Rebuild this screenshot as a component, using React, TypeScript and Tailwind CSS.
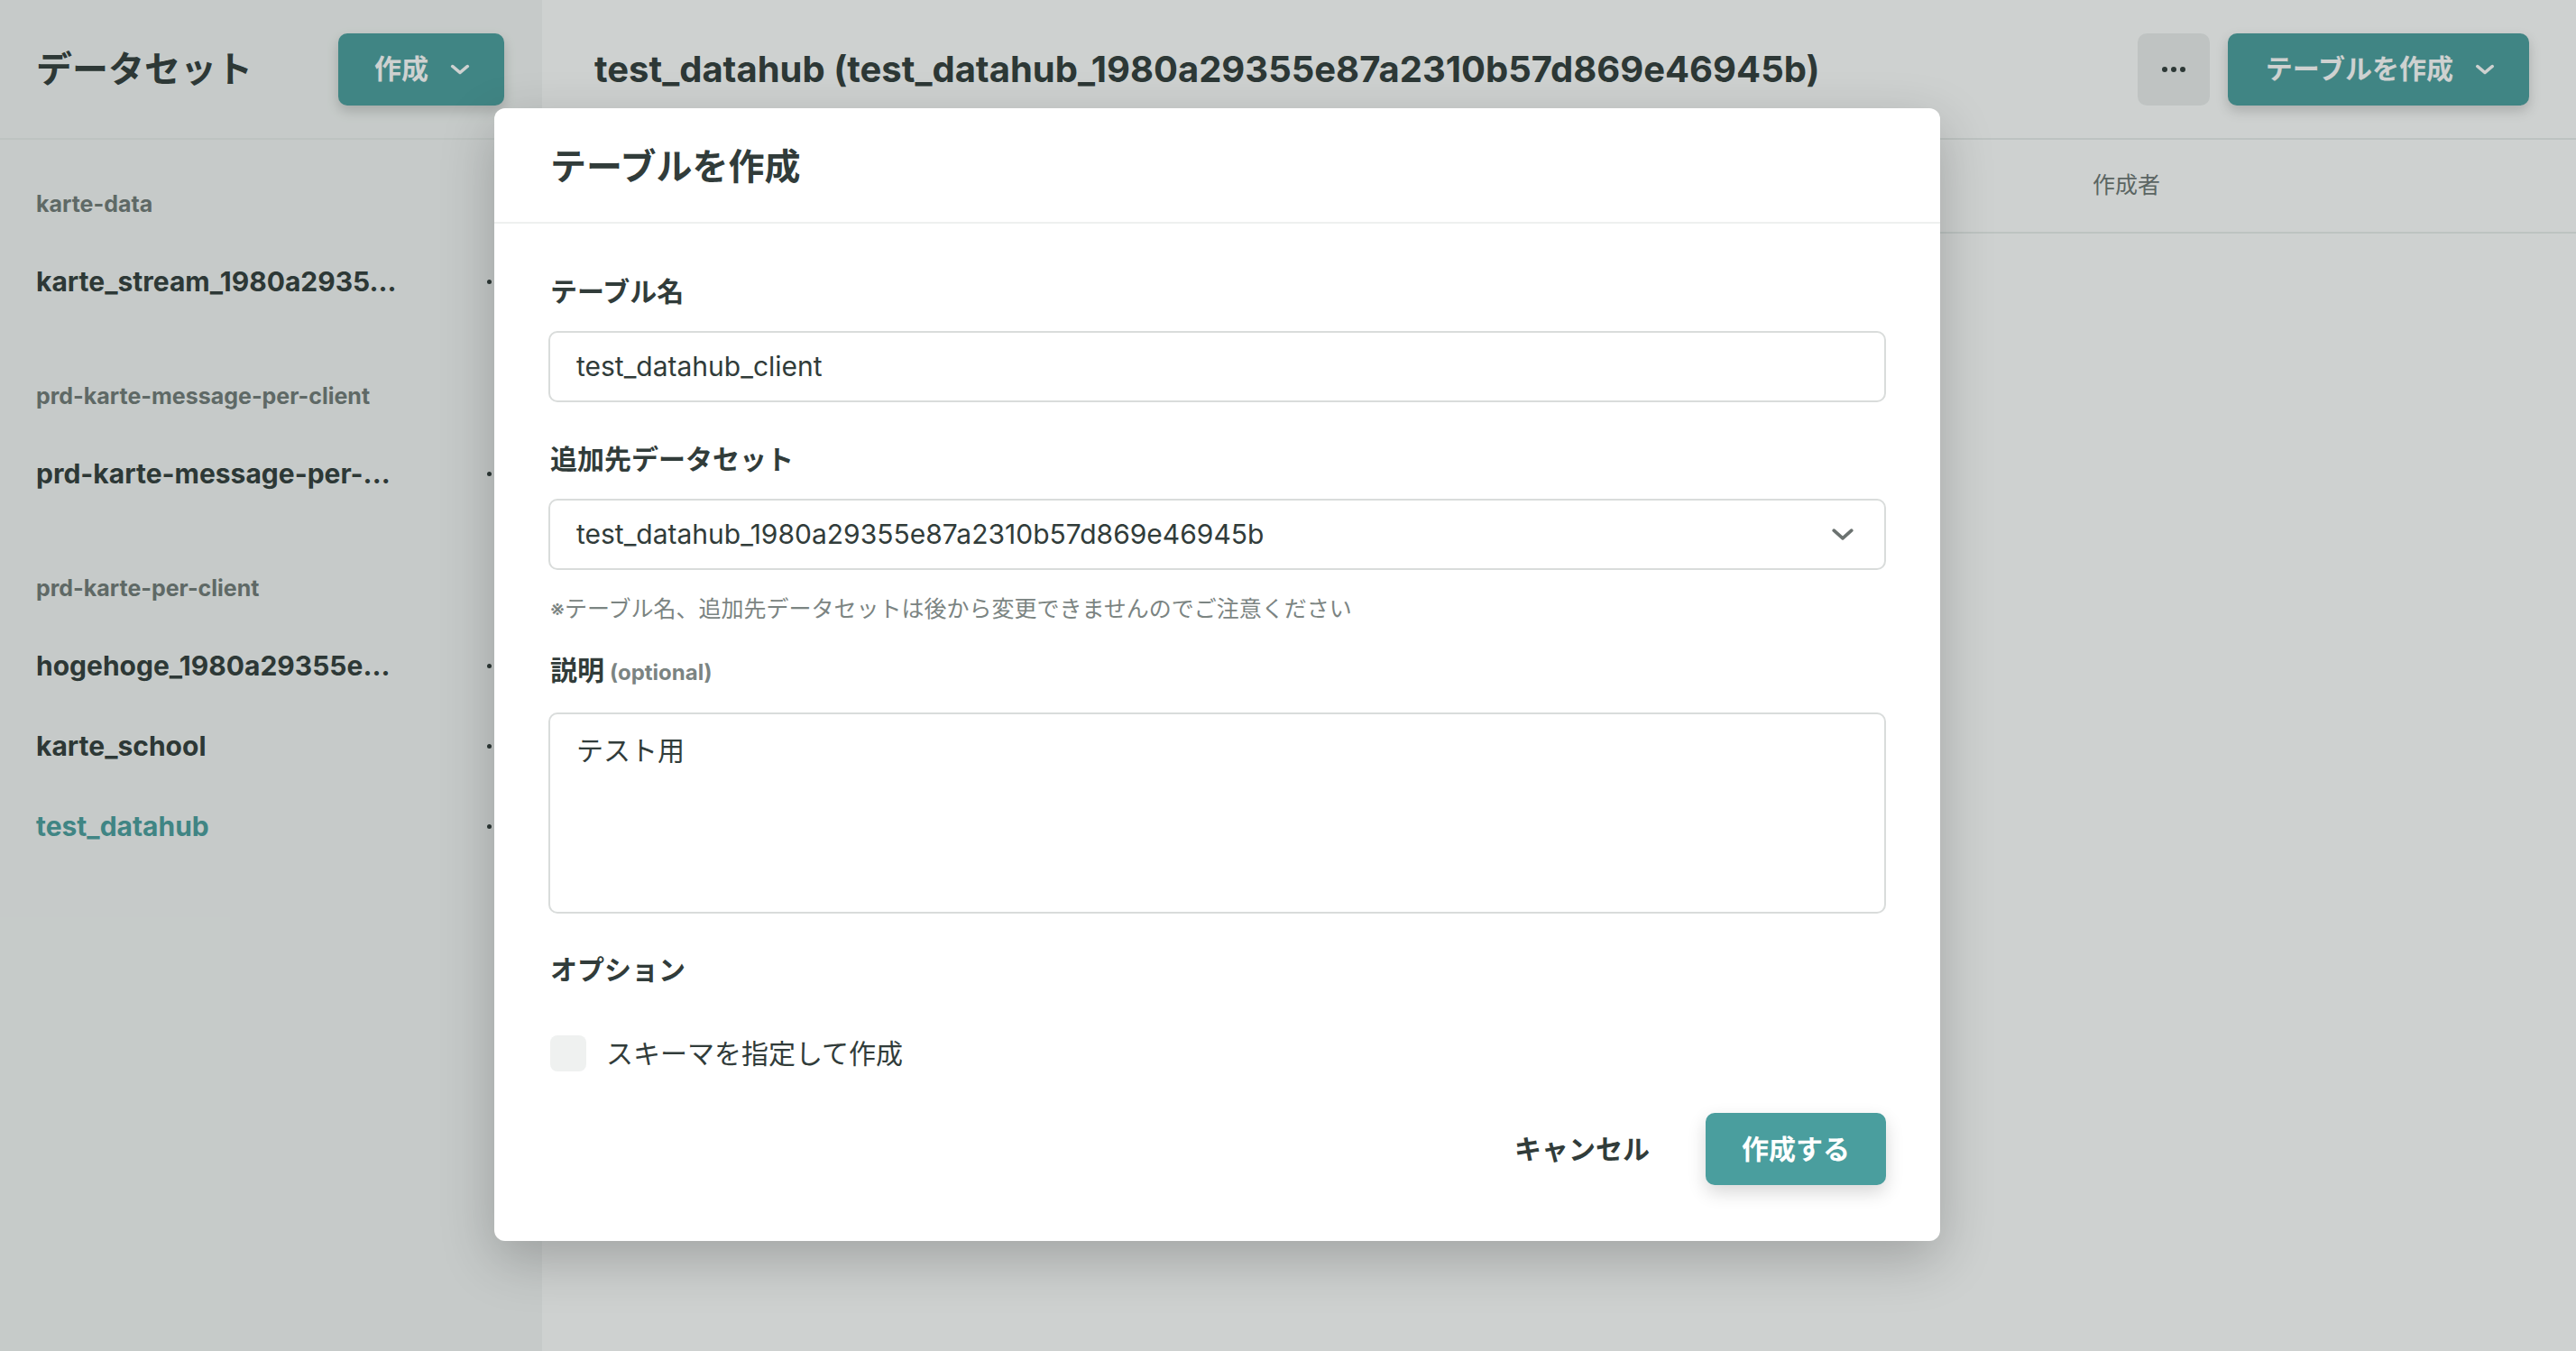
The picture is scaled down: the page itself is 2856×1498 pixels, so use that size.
import React from "react";

const Chevron = ({ w, h, sw, className }: { w: number; h: number; sw: number; className?: string }) => (
  <svg width={w} height={h} viewBox="0 0 24 14" fill="none" className={className} preserveAspectRatio="none">
    <path d="M3 3L12 11L21 3" stroke="currentColor" strokeWidth={sw} strokeLinecap="round" strokeLinejoin="round" />
  </svg>
);

const Dots = ({ className }: { className?: string }) => (
  <div className={"flex items-center gap-[5px] " + (className ?? "")}>
    <span className="block w-[5px] h-[5px] rounded-full bg-[#313c3a]" />
    <span className="block w-[5px] h-[5px] rounded-full bg-[#313c3a]" />
    <span className="block w-[5px] h-[5px] rounded-full bg-[#313c3a]" />
  </div>
);

type Group = { label: string; items: { name: string; active?: boolean }[] };

const groups: Group[] = [
  { label: "karte-data", items: [{ name: "karte_stream_1980a2935..." }] },
  { label: "prd-karte-message-per-client", items: [{ name: "prd-karte-message-per-..." }] },
  {
    label: "prd-karte-per-client",
    items: [{ name: "hogehoge_1980a29355e..." }, { name: "karte_school" }, { name: "test_datahub", active: true }],
  },
];

export default function App() {
  return (
    <div className="relative w-[2856px] h-[1498px] overflow-hidden bg-white font-[Inter,'Noto_Sans_CJK_JP',sans-serif] text-[#313c3a]">
      {/* Page underneath */}
      <div className="flex h-full">
        <aside className="w-[601px] shrink-0 bg-[#f5f7f6] flex flex-col">
          <div className="h-[155px] shrink-0 border-b-2 border-[#eaedec] flex items-center justify-between pl-[40px] pr-[42px]">
            <h1 className="text-[40px] font-bold leading-none">データセット</h1>
            <button className="h-[80px] flex items-center gap-[24px] pl-[40px] pr-[38px] rounded-[10px] bg-[#4a9e9e] text-white text-[30px] font-bold shadow-[0_6px_14px_rgba(0,0,0,0.18)]">
              <span>作成</span>
              <Chevron w={22} h={12} sw={4} />
            </button>
          </div>
          <nav className="pt-[55px] flex flex-col gap-[66px]">
            {groups.map((g) => (
              <div key={g.label} className="flex flex-col">
                <div className="h-[32px] leading-[32px] pl-[40px] text-[25px] font-bold text-[#717a78]">{g.label}</div>
                <div className="mt-[26px] flex flex-col">
                  {g.items.map((it) => (
                    <div key={it.name} className="h-[89px] flex items-center justify-between pl-[40px] pr-[36px]">
                      <span
                        className={
                          "text-[30px] font-bold whitespace-nowrap " + (it.active ? "text-[#4a9e9e]" : "text-[#313c3a]")
                        }
                      >
                        {it.name}
                      </span>
                      <Dots />
                    </div>
                  ))}
                </div>
              </div>
            ))}
          </nav>
        </aside>
        <main className="flex-1 flex flex-col min-w-0">
          <header className="h-[155px] shrink-0 border-b-2 border-[#eaedec] flex items-center justify-between pl-[58px] pr-[52px]">
            <h2 className="text-[40px] font-bold leading-none whitespace-nowrap">
              test_datahub (test_datahub_1980a29355e87a2310b57d869e46945b)
            </h2>
            <div className="flex items-center gap-[20px]">
              <button className="w-[80px] h-[80px] rounded-[10px] bg-[#eceeee] flex items-center justify-center">
                <div className="flex items-center gap-[4px]">
                  <span className="block w-[6px] h-[6px] rounded-full bg-[#313c3a]" />
                  <span className="block w-[6px] h-[6px] rounded-full bg-[#313c3a]" />
                  <span className="block w-[6px] h-[6px] rounded-full bg-[#313c3a]" />
                </div>
              </button>
              <button className="h-[80px] flex items-center gap-[24px] pl-[42px] pr-[38px] rounded-[10px] bg-[#4a9e9e] text-white text-[30px] font-bold shadow-[0_6px_14px_rgba(0,0,0,0.18)]">
                <span>テーブルを作成</span>
                <Chevron w={22} h={12} sw={4} />
              </button>
            </div>
          </header>
          <div className="h-[104px] shrink-0 border-b-2 border-[#eaedec] grid grid-cols-[1661px_1fr] items-center pl-[58px] text-[25px] text-[#6c7573]">
            <div />
            <div>作成者</div>
          </div>
        </main>
      </div>

      {/* Overlay */}
      <div className="absolute inset-0 bg-[rgba(30,45,40,0.22)]" />

      {/* Modal */}
      <div className="absolute left-[548px] top-[120px] w-[1603px] bg-white rounded-[12px] shadow-[0_20px_60px_rgba(0,0,0,0.22)] flex flex-col">
        <div className="h-[128px] border-b-2 border-[#eef0ef] flex items-center pl-[62px] pt-[4px]">
          <h3 className="text-[40px] font-bold leading-none">テーブルを作成</h3>
        </div>
        <div className="px-[60px] pt-[55px] pb-[62px] flex flex-col">
          <div className="text-[30px] font-bold leading-[40px] pl-[2px]">テーブル名</div>
          <div className="mt-[24px] h-[79px] border-2 border-[#d9dcdb] rounded-[10px] flex items-center px-[29px] text-[30px]">
            test_datahub_client
          </div>

          <div className="mt-[43px] text-[30px] font-bold leading-[40px] pl-[2px]">追加先データセット</div>
          <div className="mt-[24px] h-[79px] border-2 border-[#d9dcdb] rounded-[10px] flex items-center justify-between pl-[29px] pr-[33px] text-[30px]">
            <span>test_datahub_1980a29355e87a2310b57d869e46945b</span>
            <Chevron w={26} h={15} sw={3.4} className="text-[#6b7270]" />
          </div>
          <p className="mt-[27px] text-[25px] leading-[32px] text-[#7b8482] pl-[2px]">
            ※テーブル名、追加先データセットは後から変更できませんのでご注意ください
          </p>

          <div className="mt-[32px] flex items-baseline gap-[6px] leading-[40px] pl-[2px]">
            <span className="text-[30px] font-bold">説明</span>
            <span className="text-[24px] font-bold text-[#7b8482]">(optional)</span>
          </div>
          <div className="mt-[24px] h-[223px] border-2 border-[#d9dcdb] rounded-[10px] px-[29px] pt-[18px] text-[30px] leading-[45px]">
            テスト用
          </div>

          <div className="mt-[42px] text-[30px] font-bold leading-[40px] pl-[2px]">オプション</div>
          <label className="mt-[53px] flex items-center gap-[22px] pl-[2px]">
            <span className="block w-[40px] h-[40px] rounded-[8px] bg-[#eff1f0]" />
            <span className="text-[30px] leading-[40px]">スキーマを指定して作成</span>
          </label>

          <div className="mt-[46px] flex justify-end items-center gap-[62px]">
            <button className="text-[30px] font-bold">キャンセル</button>
            <button className="h-[80px] w-[200px] rounded-[10px] bg-[#4a9e9e] text-white text-[30px] font-bold shadow-[0_8px_20px_rgba(0,0,0,0.16)]">
              作成する
            </button>
          </div>
        </div>
      </div>
    </div>
  );
}
